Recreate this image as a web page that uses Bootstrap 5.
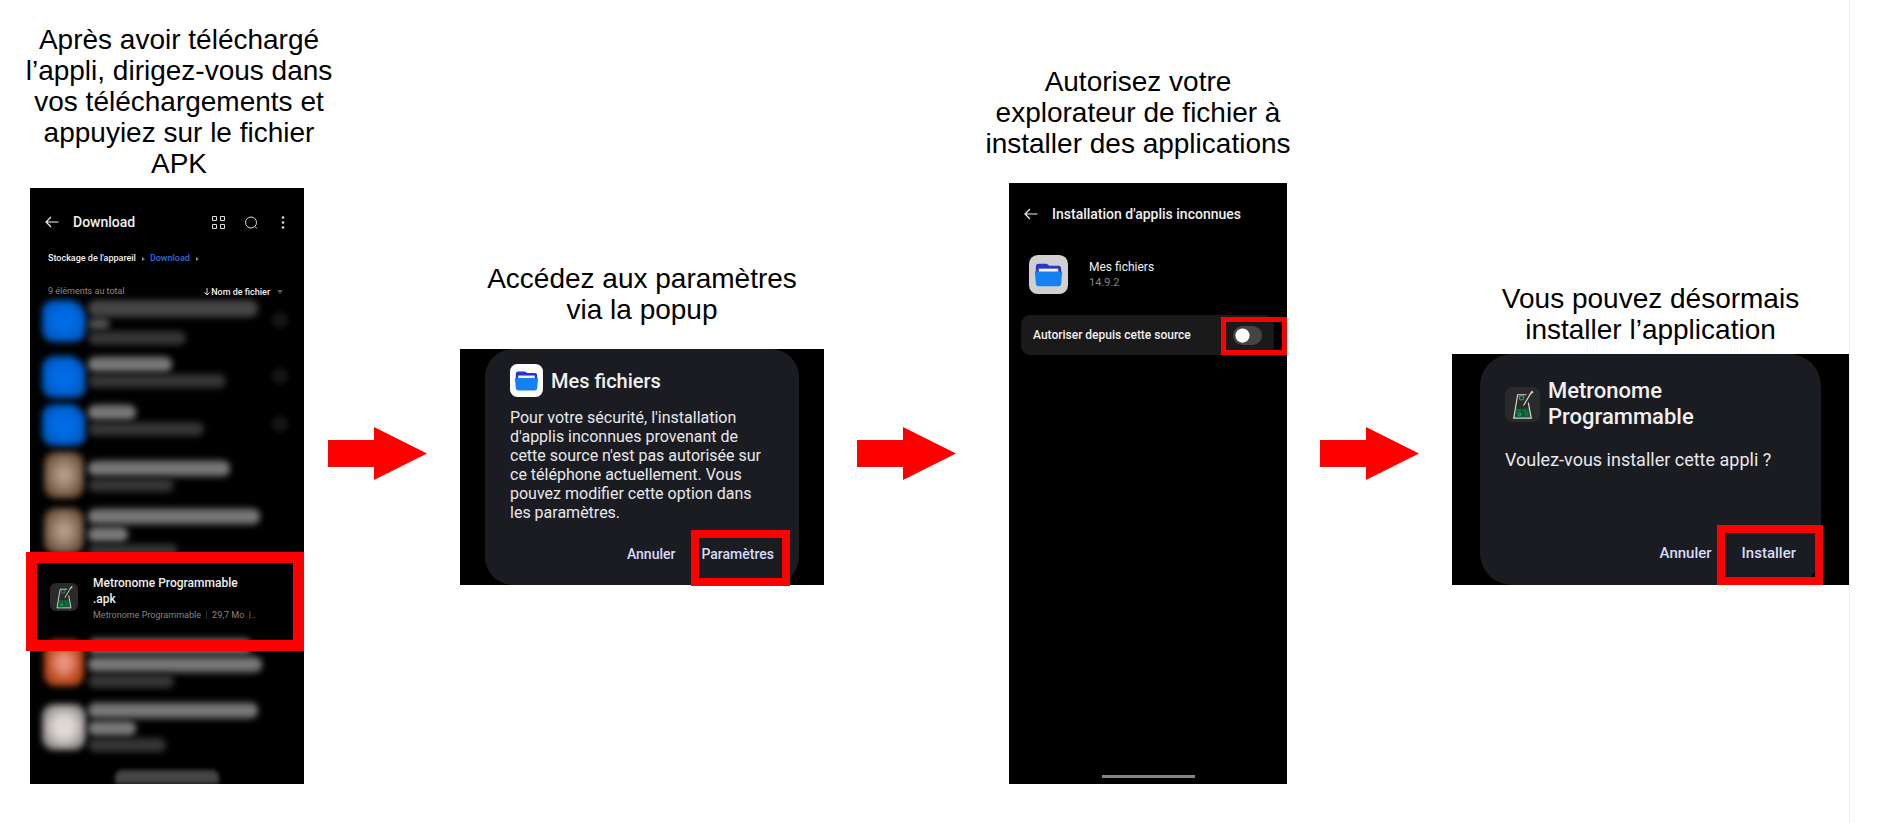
<!DOCTYPE html>
<html lang="fr">
<head>
<meta charset="utf-8">
<meta name="viewport" content="width=device-width, initial-scale=1">
<title>Installer l’application</title>
<link href="https://cdn.jsdelivr.net/npm/bootstrap@5.3.0/dist/css/bootstrap.min.css" rel="stylesheet">
<style>
  body { background: #fff; color: #000; font-family: "Liberation Sans", Arial, sans-serif; }
  .guide {
    display: grid;
    grid-template-columns:
      minmax(0, 298fr) minmax(0, 132fr) minmax(0, 364fr) minmax(0, 165fr)
      minmax(0, 298fr) minmax(0, 165fr) minmax(0, 397fr);
    align-items: end; align-content: start;
    min-height: 100vh; margin-right: 31px; padding: 24px 0 38px 30px;
    box-shadow: 1px 0 #ececec;
  }
  .caption-text { font-size: 28px; line-height: 31px; text-align: center; white-space: nowrap; margin: 0 0 9px; }
  .caption-far { margin-bottom: 24px; }
  .is-popup { padding-bottom: 199px; }
  .arrow { padding-bottom: 304px; }
  .arrow svg { width: 99px; display: block; }

  .screen, .popup { background: #000; color: #f0f0f0; font-family: Roboto, sans-serif; }
  .screen button, .popup button, .screen select { background: none; border: 0; padding: 0; color: inherit; line-height: 1; }
  .screen button svg { display: block; }
  .frame { position: absolute; border: 8px solid #f00; pointer-events: none; z-index: 2; }

  /* downloads screen */
  .downloads { width: 92%; min-height: 596px; }
  .top-bar { height: 28px; margin-top: 20px; padding: 0 15px; }
  .top-bar h2 { font-size: 14px; line-height: 20px; font-weight: 500; margin: 0 0 0 14px; }
  .path { height: 20px; margin-top: 13px; padding-left: 18px; font-size: 9px; font-weight: 500; }
  .path a { color: #2f6bd8; text-decoration: none; }
  .sort { height: 16px; margin-top: 15px; padding: 0 21px 0 18px; font-size: 9px; color: #8a8a8a; }
  .sort select { appearance: none; color: #f0f0f0; font-weight: 500; width: 66px; font-size: 9px; }
  .file { padding: 0 12px; height: 48px; align-items: flex-start; gap: 2px; }
  .file-tall { height: 56px; }
  .file-last { height: 55px; }
  .thumb { width: 44px; height: 42px; border-radius: 12px; filter: blur(3px); flex: none; }
  .thumb-folder { background: radial-gradient(#006be6 30%, #0050ae 90%); border-top-right-radius: 18px; }
  .thumb-tan { background: radial-gradient(#b29c88 15%, #6b5038 75%); width: 40px; height: 46px; margin: 0 2px; }
  .thumb-orange { background: radial-gradient(#e8937a 20%, #b8481c 60%); width: 40px; height: 46px; margin: 2px 2px 0; }
  .thumb-white { background: radial-gradient(#ded8d2 30%, #7c7878 85%); height: 46px; margin-top: 2px; }
  .smear { display: block; height: 17px; margin-bottom: 1px; border-radius: 8px; filter: blur(3px);
    background: linear-gradient(#555, #848484 50%, #555); }
  .smear-dim { background: #454545; }
  .smear-sub { height: 14px; background: #343434; }
  .smear-short { height: 12px; background: #505050; }
  .dot { width: 16px; height: 16px; margin: 12px 4px 0 auto; border-radius: 50%; background: #131313; filter: blur(2px); }
  .apk { position: relative; height: 75px; padding: 12px 20px 0; gap: 15px; }
  .apk h3 { font-size: 12px; line-height: 16px; font-weight: 500; margin: 0; }
  .apk p { font-size: 9px; line-height: 16px; margin: 0; color: #858585; white-space: nowrap; }
  .apk .frame { border-width: 11px; inset: -11px 0 -13px -4px; }
  .nav-smear { width: 104px; height: 14px; background: #444; border-radius: 7px 7px 0 0; filter: blur(2px); }

  /* unknown apps screen */
  .unknown { width: 278px; min-height: 601px; }
  .unknown .top-bar { margin-top: 17px; }
  .app-row { margin: 27px 20px 21px; gap: 21px; }
  .app-name { font-size: 12px; line-height: 16px; }
  .app-version { font-size: 11px; line-height: 16px; color: #858585; }
  .allow { position: relative; margin: 0 13px 0 12px; padding: 0 12px; height: 40px; background: #1a1a1a; border-radius: 9px; font-size: 12px; font-weight: 500; }
  .allow .form-check-input { width: 29px; height: 19px; margin: 0; border: 0; background-color: #444; background-size: 19px;
    background-image: url("data:image/svg+xml,%3csvg xmlns='http://www.w3.org/2000/svg' viewBox='-4 -4 8 8'%3e%3ccircle r='3' fill='%23fff'/%3e%3c/svg%3e"); }
  .allow .frame { border-width: 5px; inset: 2px -13px 0 auto; width: 66px; background: linear-gradient(#000, #000) right / 8px no-repeat; }
  .home-bar { width: 93px; height: 3px; margin: auto auto 6px; background: #858585; }

  /* dialogs */
  .popup { padding: 0 25px; }
  .dialog { position: relative; background: #1b1c21; border-radius: 28px; padding: 15px 25px 0; height: 236px; }
  .dialog h2 { font-size: 20px; line-height: 26px; font-weight: 500; margin: 0; }
  .dialog p { font-size: 16px; line-height: 19px; margin: 0; color: #e8e8ec; white-space: nowrap; }
  .dialog header { margin-bottom: 11px; }
  .dialog button { font-size: 14px; font-weight: 500; color: #d5dcfa; }
  .popup-install { padding: 0 28px; }
  .dialog-install { border-radius: 32px; height: 231px; padding-top: 24px; }
  .dialog-install header { margin-bottom: 20px; }
  .dialog-install h2 { font-size: 22px; }
  .dialog-install p { font-size: 18px; }
  .dialog-install button { font-size: 15px; }
  .dialog-actions { column-gap: 26px; }
  .dialog-install .dialog-actions { column-gap: 30px; }
</style>
</head>
<body>
<svg width="0" height="0" class="d-none" aria-hidden="true">
  <symbol id="back" viewBox="0 0 14 12"><path d="M13.500 6H1M6 1 1 6l5 5" fill="none" stroke="currentColor" stroke-width="1.200"/></symbol>
  <symbol id="folder" viewBox="0 0 40 40">
    <rect width="40" height="40" rx="9" fill="currentColor"/>
    <path d="M7 12q0-3 3-3h8l3 2h9q3 0 3 3v8H7z" fill="#2a35c4"/>
    <path d="M10 14h20v6H10z" fill="#f2f5ff"/>
    <path d="M6 17h28l-1 12q0 3-3 3H10q-3 0-3-3z" fill="#1580f2"/>
  </symbol>
  <symbol id="metronome" viewBox="0 0 36 36">
    <rect width="36" height="36" rx="8" fill="#2a2a2a"/>
    <path d="M11 22h14l2 10H9z" fill="#0d5a34"/>
    <path d="M22 8h-9L9 32h18l-3-16" fill="none" stroke="#d8d8d8" stroke-width="1.200"/>
    <path d="m19 19 9-15M25 8l4-3" fill="none" stroke="#d8d8d8" stroke-width="1.200"/>
    <circle cx="17" cy="11" r="2.200" fill="none" stroke="#27a363" stroke-width="1.200"/>
    <circle cx="15" cy="28" r="1.500" fill="none" stroke="#3cc07c" stroke-width=".8"/>
    <path d="M11 24h5M19 24h2v6M23 25v5M12 31h5" fill="none" stroke="#1f8a54" stroke-width=".8"/>
  </symbol>
  <symbol id="big-arrow" viewBox="0 0 99 53"><path d="M0 13h46V0l53 26.500L46 53V40H0z" fill="#f00"/></symbol>
</svg>

<main class="guide">
  <section class="d-flex flex-column">
    <p class="caption-text align-self-center">Après avoir téléchargé<br>l’appli, dirigez-vous dans<br>vos téléchargements et<br>appuyiez sur le fichier<br>APK</p>
    <div class="screen downloads d-flex flex-column">
      <div class="top-bar d-flex align-items-center">
        <button type="button" aria-label="Retour"><svg width="14" height="12"><use href="#back"/></svg></button>
        <h2>Download</h2>
        <div class="d-flex align-items-center ms-auto">
          <button type="button" aria-label="Grille"><svg width="13" height="13" viewBox="0 0 13 13" fill="none" stroke="#ddd"><path d="M.5.500h4v4h-4zM8.500.500h4v4h-4zM.5 8.500h4v4h-4zM8.500 8.500h4v4h-4z"/></svg></button>
          <button type="button" aria-label="Rechercher" class="mx-3 px-1"><svg width="14" height="13" viewBox="0 0 14 13" fill="none" stroke="#ddd"><circle cx="6" cy="6.500" r="5.500"/><path d="m10 10.500 2 2"/></svg></button>
          <button type="button" aria-label="Menu"><svg width="10" height="13" viewBox="0 0 10 13" fill="#ddd"><circle cx="4" cy="1.500" r="1.300"/><circle cx="4" cy="6.500" r="1.300"/><circle cx="4" cy="11.500" r="1.300"/></svg></button>
        </div>
      </div>
      <nav class="path d-flex align-items-center" aria-label="Chemin">
        <span>Stockage de l'appareil</span>
        <svg width="14" height="6" viewBox="0 0 14 6"><path d="m6 1 3 2-3 2z" fill="#888"/></svg>
        <a href="#">Download</a>
        <svg width="14" height="6" viewBox="0 0 14 6"><path d="m6 1 3 2-3 2z" fill="#888"/></svg>
      </nav>
      <div class="sort d-flex align-items-center">
        <span class="me-auto">9 éléments au total</span>
        <svg width="7" height="8" viewBox="0 0 7 8" fill="none" stroke="#ddd"><path d="M3 0v7M.5 4.500 3 7l2.500-2.500"/></svg>
        <select aria-label="Trier par"><option>Nom de fichier</option></select>
        <svg width="6" height="5" viewBox="0 0 6 5"><path d="M0 0h6L3 4z" fill="#555"/></svg>
      </div>
      <div class="file file-tall d-flex">
        <span class="thumb thumb-folder"></span>
        <span><span class="smear smear-dim" style="width:170px"></span><span class="smear smear-short" style="width:22px"></span><span class="smear smear-sub" style="width:98px"></span></span>
        <span class="dot"></span>
      </div>
      <div class="file d-flex">
        <span class="thumb thumb-folder"></span>
        <span><span class="smear" style="width:84px"></span><span class="smear smear-sub" style="width:138px"></span></span>
        <span class="dot"></span>
      </div>
      <div class="file d-flex">
        <span class="thumb thumb-folder"></span>
        <span><span class="smear" style="width:48px"></span><span class="smear smear-sub" style="width:116px"></span></span>
        <span class="dot"></span>
      </div>
      <div class="file file-tall d-flex">
        <span class="thumb thumb-tan"></span>
        <span class="pt-2"><span class="smear" style="width:142px"></span><span class="smear smear-sub" style="width:86px"></span></span>
      </div>
      <div class="file file-last d-flex">
        <span class="thumb thumb-tan"></span>
        <span><span class="smear" style="width:172px"></span><span class="smear" style="width:40px"></span><span class="smear smear-sub" style="width:90px"></span></span>
      </div>
      <div class="apk d-flex align-items-start bg-black">
        <svg class="mt-2 flex-shrink-0" width="28" height="28"><use href="#metronome"/></svg>
        <div>
          <h3>Metronome Programmable<br>.apk</h3>
          <p>Metronome Programmable&nbsp; <span class="opacity-50">|</span>&nbsp; 29,7 Mo&nbsp; |..</p>
        </div>
        <span class="frame"></span>
      </div>
      <div class="file d-flex mb-3">
        <span class="thumb thumb-orange"></span>
        <span><span class="smear" style="width:164px"></span><span class="smear" style="width:174px"></span><span class="smear smear-sub" style="width:86px"></span></span>
      </div>
      <div class="file d-flex">
        <span class="thumb thumb-white"></span>
        <span><span class="smear" style="width:170px"></span><span class="smear" style="width:48px"></span><span class="smear smear-sub" style="width:78px"></span></span>
      </div>
      <div class="d-flex justify-content-center overflow-hidden mt-auto pt-1"><span class="nav-smear"></span></div>
    </div>
  </section>

  <div class="arrow d-flex"><svg height="53" aria-hidden="true"><use href="#big-arrow"/></svg></div>

  <section class="is-popup d-flex flex-column">
    <p class="caption-text caption-far align-self-center">Accédez aux paramètres<br>via la popup</p>
    <div class="popup">
      <div class="dialog d-flex flex-column">
        <header class="d-flex align-items-center">
          <svg class="me-2 text-white" width="33" height="33"><use href="#folder"/></svg>
          <h2>Mes fichiers</h2>
        </header>
        <p>Pour votre sécurité, l'installation<br>d'applis inconnues provenant de<br>cette source n'est pas autorisée sur<br>ce téléphone actuellement. Vous<br>pouvez modifier cette option dans<br>les paramètres.</p>
        <div class="dialog-actions d-flex justify-content-end mt-auto mb-4">
          <button type="button">Annuler</button>
          <button type="button">Paramètres</button>
        </div>
        <span class="frame" style="width:99px;height:56px;right:9px;bottom:-1px"></span>
      </div>
    </div>
  </section>

  <div class="arrow d-flex justify-content-center"><svg height="53" aria-hidden="true"><use href="#big-arrow"/></svg></div>

  <section class="d-flex flex-column">
    <p class="caption-text caption-far align-self-center">Autorisez votre<br>explorateur de fichier à<br>installer des applications</p>
    <div class="screen unknown d-flex flex-column align-self-end">
      <div class="top-bar d-flex align-items-center">
        <button type="button" aria-label="Retour"><svg width="14" height="12"><use href="#back"/></svg></button>
        <h2>Installation d'applis inconnues</h2>
      </div>
      <div class="app-row d-flex align-items-center">
        <svg width="39" height="39" style="color:#d0d0d0"><use href="#folder"/></svg>
        <div>
          <div class="app-name">Mes fichiers</div>
          <div class="app-version">14.9.2</div>
        </div>
      </div>
      <div class="allow form-switch d-flex align-items-center justify-content-between">
        <label for="allow-source">Autoriser depuis cette source</label>
        <span class="frame"></span>
        <input class="form-check-input position-relative z-3" type="checkbox" role="switch" id="allow-source">
      </div>
      <span class="home-bar"></span>
    </div>
  </section>

  <div class="arrow d-flex justify-content-center"><svg height="53" aria-hidden="true"><use href="#big-arrow"/></svg></div>

  <section class="is-popup d-flex flex-column">
    <p class="caption-text align-self-center">Vous pouvez désormais<br>installer l’application</p>
    <div class="popup popup-install">
      <div class="dialog dialog-install d-flex flex-column">
        <header class="d-flex align-items-center">
          <svg class="me-2" width="35" height="35"><use href="#metronome"/></svg>
          <h2>Metronome<br>Programmable</h2>
        </header>
        <p>Voulez-vous installer cette appli ?</p>
        <div class="dialog-actions d-flex justify-content-end mt-auto mb-4">
          <button type="button">Annuler</button>
          <button type="button">Installer</button>
        </div>
        <span class="frame" style="width:106px;height:60px;right:-2px;bottom:0"></span>
      </div>
    </div>
  </section>
</main>
<script src="https://cdn.jsdelivr.net/npm/bootstrap@5.3.0/dist/js/bootstrap.bundle.min.js"></script>
</body>
</html>
